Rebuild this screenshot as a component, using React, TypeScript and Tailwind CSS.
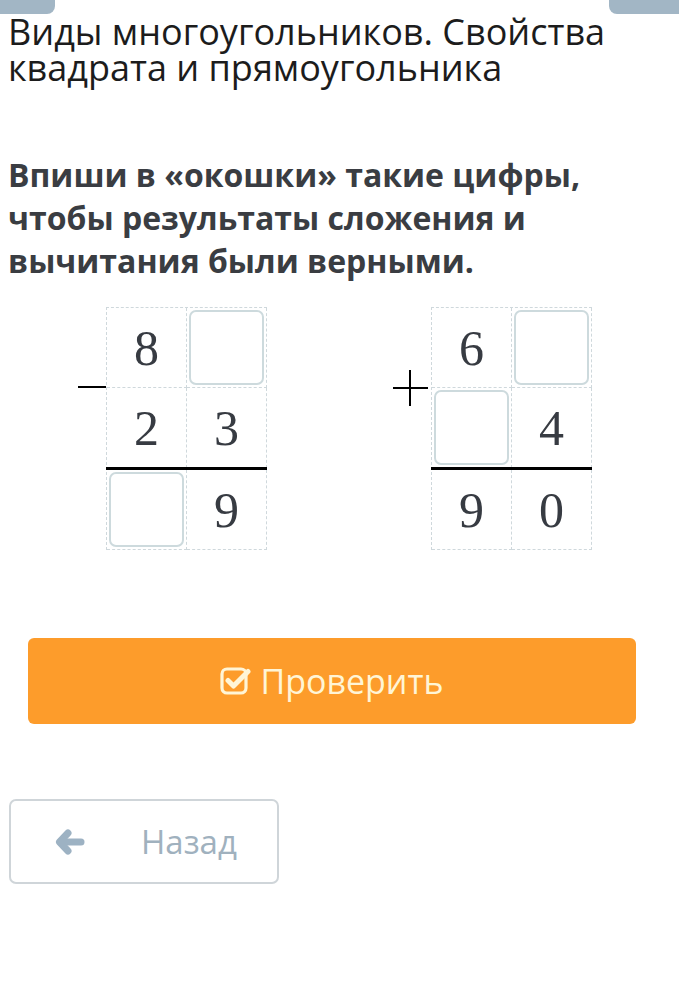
import React from "react";

type Cell = { d?: string; box?: boolean };

function Digit({ cell }: { cell: Cell }) {
  return (
    <div className="h-[80px] w-[80px] border-r border-b border-dashed border-[#cfd8dc] p-[2px]">
      {cell.box ? (
        <div className="h-full w-full rounded-[7px] border-2 border-[#cddadd] bg-white" />
      ) : (
        <div className="flex h-full w-full items-center justify-center text-[50px] leading-none text-[#373b42] [font-family:'Liberation_Serif',serif]">
          {cell.d}
        </div>
      )}
    </div>
  );
}

function Column({ rows }: { rows: Cell[][] }) {
  return (
    <div className="grid w-[161px] grid-cols-2 border-t border-l border-dashed border-[#cfd8dc]">
      {rows[0].map((c, i) => (
        <Digit key={"a" + i} cell={c} />
      ))}
      {rows[1].map((c, i) => (
        <Digit key={"b" + i} cell={c} />
      ))}
      <div className="col-span-2 -mt-px -ml-px h-[3px] bg-black" />
      {rows[2].map((c, i) => (
        <Digit key={"c" + i} cell={c} />
      ))}
    </div>
  );
}

export default function App() {
  return (
    <div className="min-h-[999px] w-full bg-white [font-family:'Open_Sans',sans-serif]">
      <div className="flex justify-between">
        <div className="h-[14px] w-[55px] rounded-br-[8px] bg-[#a2b6c5]" />
        <div className="h-[14px] w-[70px] rounded-bl-[8px] bg-[#a2b6c5]" />
      </div>

      <h1 className="px-[8px] text-[36px] leading-[36px] font-normal text-[#1c1c1c]">
        Виды многоугольников. Свойства квадрата и прямоугольника
      </h1>

      <p className="mt-[67px] px-[8px] text-[32px] leading-[43px] font-bold text-[#3a3d42]">
        Впиши в «окошки» такие цифры, чтобы результаты сложения и вычитания были верными.
      </p>

      <div className="mt-[25px] flex pl-[78px]">
        <div className="flex items-start">
          <div className="mt-[79px] h-[2px] w-[28px] bg-black" />
          <Column
            rows={[
              [{ d: "8" }, { box: true }],
              [{ d: "2" }, { d: "3" }],
              [{ box: true }, { d: "9" }],
            ]}
          />
        </div>
        <div className="ml-[126px] flex items-start">
          <div className="relative mt-[63px] h-[36px] w-[38px]">
            <div className="absolute top-[17px] left-[0px] h-[2px] w-[35px] bg-black" />
            <div className="absolute top-0 left-[16px] h-[36px] w-[2px] bg-black" />
          </div>
          <Column
            rows={[
              [{ d: "6" }, { box: true }],
              [{ box: true }, { d: "4" }],
              [{ d: "9" }, { d: "0" }],
            ]}
          />
        </div>
      </div>

      <div className="mt-[88px] px-[28px] pr-[43px]">
        <button className="flex h-[86px] w-full items-center justify-center gap-[9px] rounded-[6px] bg-[#fd9c2b] text-[34px] text-[#fff5d6]">
          <svg width="31" height="30" viewBox="0 0 31 30" fill="none">
            <rect x="2" y="3" width="24" height="24" rx="5" stroke="#fff5d6" strokeWidth="3.2" />
            <path d="M8 14.5 L13.5 20 L28 5.5" stroke="#fff5d6" strokeWidth="5" strokeLinecap="round" strokeLinejoin="round" />
          </svg>
          <span className="leading-none">Проверить</span>
        </button>
      </div>

      <div className="mt-[75px] px-[9px]">
        <button className="flex h-[85px] w-[270px] items-center rounded-[7px] border-2 border-[#cfd5d9] bg-white pl-[44px] text-[33px] text-[#a0b1be]">
          <svg width="30" height="26" viewBox="0 0 30 26" fill="none">
            <path d="M13 4 L4.5 13 L13 22" stroke="#9db2c3" strokeWidth="7" strokeLinecap="round" strokeLinejoin="round" />
            <path d="M6 13 H26" stroke="#9db2c3" strokeWidth="7" strokeLinecap="round" />
          </svg>
          <span className="ml-[56px] leading-none">Назад</span>
        </button>
      </div>
    </div>
  );
}
